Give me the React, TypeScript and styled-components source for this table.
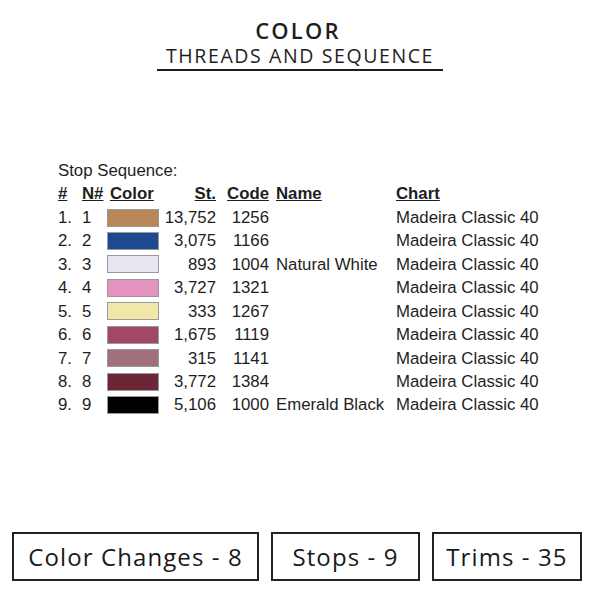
import React from "react";
import styled, { createGlobalStyle } from "styled-components";

const GlobalStyle = createGlobalStyle`
  html, body {
    margin: 0;
    padding: 0;
    background: #ffffff;
  }
`;

const Page = styled.div`
  width: 600px;
  height: 600px;
  display: flex;
  flex-direction: column;
  background: #fff;
  color: #1e1e1e;
  overflow: hidden;
`;

const Header = styled.div`
  display: flex;
  flex-direction: column;
  align-items: center;
  padding-top: 18px;
`;

const Title = styled.div`
  font-family: "Open Sans", "DejaVu Sans", sans-serif;
  font-size: 22px;
  line-height: 24px;
  font-weight: 600;
  letter-spacing: 2.2px;
  margin-right: 4px;
`;

const Subtitle = styled.div`
  width: 286px;
  margin-top: 3px;
  text-align: center;
  font-family: "Open Sans", "DejaVu Sans", sans-serif;
  font-size: 19.5px;
  line-height: 22px;
  font-weight: 400;
  letter-spacing: 1.6px;
  padding-bottom: 2px;
  border-bottom: 2px solid #1e1e1e;
`;

const Sequence = styled.div`
  margin-top: 88px;
  margin-left: 58px;
  font-family: "Liberation Sans", Arial, sans-serif;
  font-size: 16.8px;
  line-height: 23.44px;
  color: #1e1e1e;
`;

const Caption = styled.div``;

const Grid = styled.div`
  display: grid;
  grid-template-columns: 24px 25px 53px 56px 53px 127px auto;
  grid-auto-rows: 23.44px;
  align-items: center;
`;

const Head = styled.div<{ $align?: string; $pad?: number }>`
  font-weight: bold;
  text-decoration: underline;
  text-align: ${(p) => p.$align || "left"};
  padding-left: ${(p) => p.$pad || 0}px;
  white-space: nowrap;
`;

const Cell = styled.div<{ $align?: string; $pad?: number }>`
  text-align: ${(p) => p.$align || "left"};
  padding-left: ${(p) => p.$pad || 0}px;
  white-space: nowrap;
`;

const Swatch = styled.div<{ $color: string }>`
  width: 50px;
  height: 16px;
  background: ${(p) => p.$color};
  border: 1px solid #9a9a9a;
`;

const Footer = styled.div`
  margin-top: auto;
  margin-bottom: 19px;
  margin-left: 12px;
  display: grid;
  grid-template-columns: 247px 149px 150px;
  column-gap: 12px;
`;

const StatBox = styled.div`
  height: 49px;
  box-sizing: border-box;
  border: 2px solid #222;
  display: flex;
  align-items: center;
  justify-content: center;
  font-family: "Open Sans", "DejaVu Sans", sans-serif;
  font-size: 24px;
  letter-spacing: 1.1px;
  color: #1a1a1a;
`;

const threads = [
  { st: "13,752", code: "1256", name: "", color: "#b98657" },
  { st: "3,075", code: "1166", name: "", color: "#1d4a8e" },
  { st: "893", code: "1004", name: "Natural White", color: "#e8e6f0" },
  { st: "3,727", code: "1321", name: "", color: "#e594c0" },
  { st: "333", code: "1267", name: "", color: "#f1e7a8" },
  { st: "1,675", code: "1119", name: "", color: "#a14868" },
  { st: "315", code: "1141", name: "", color: "#a2707b" },
  { st: "3,772", code: "1384", name: "", color: "#6c2637" },
  { st: "5,106", code: "1000", name: "Emerald Black", color: "#000000" },
];

export default function App() {
  return (
    <Page>
      <GlobalStyle />
      <Header>
        <Title>COLOR</Title>
        <Subtitle>THREADS AND SEQUENCE</Subtitle>
      </Header>

      <Sequence>
        <Caption>Stop Sequence:</Caption>
        <Grid>
          <Head>#</Head>
          <Head>N#</Head>
          <Head $pad={3}>Color</Head>
          <Head $align="right">St.</Head>
          <Head $align="right">Code</Head>
          <Head $pad={7}>Name</Head>
          <Head>Chart</Head>
          {threads.map((t, i) => (
            <React.Fragment key={i}>
              <Cell>{i + 1}.</Cell>
              <Cell>{i + 1}</Cell>
              <Swatch $color={t.color} />
              <Cell $align="right">{t.st}</Cell>
              <Cell $align="right">{t.code}</Cell>
              <Cell $pad={7}>{t.name}</Cell>
              <Cell>Madeira Classic 40</Cell>
            </React.Fragment>
          ))}
        </Grid>
      </Sequence>

      <Footer>
        <StatBox>Color Changes - 8</StatBox>
        <StatBox>Stops - 9</StatBox>
        <StatBox>Trims - 35</StatBox>
      </Footer>
    </Page>
  );
}
